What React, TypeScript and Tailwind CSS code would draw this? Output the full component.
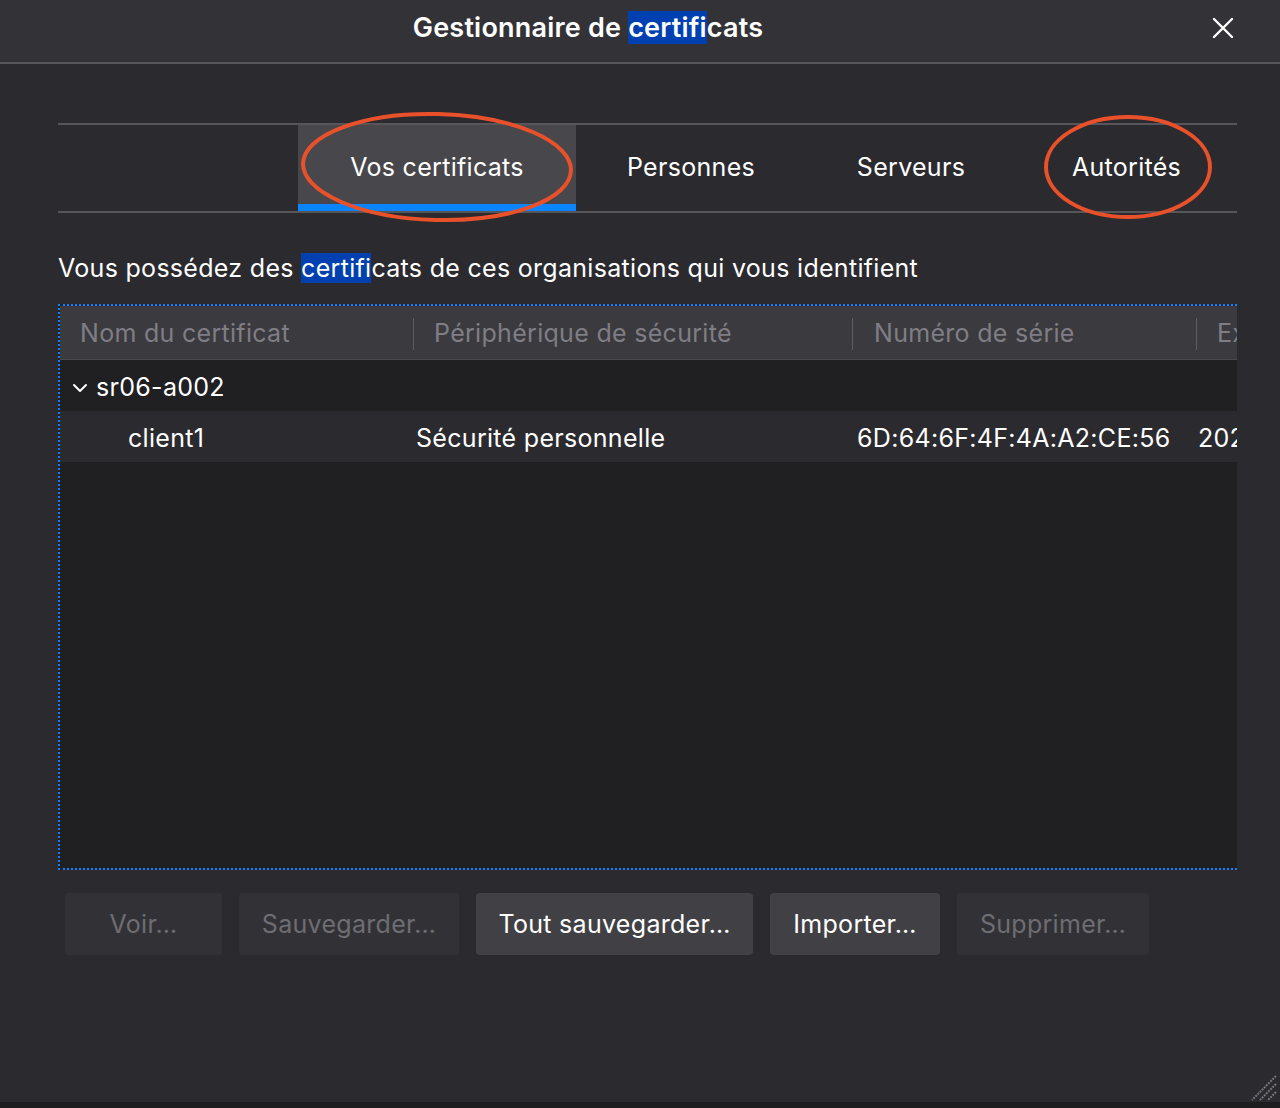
import React from "react";

const font = { fontFamily: "Inter, 'Noto Sans', sans-serif" };

const tabs = [
  { label: "Vos certificats", w: "w-[278px]", active: true },
  { label: "Personnes", w: "w-[230px]", active: false },
  { label: "Serveurs", w: "w-[210px]", active: false },
  { label: "Autorités", w: "w-[221px]", active: false },
];

const buttons = [
  { label: "Voir…", w: "w-[157px]", enabled: false },
  { label: "Sauvegarder…", w: "w-[220px]", enabled: false },
  { label: "Tout sauvegarder…", w: "w-[277px]", enabled: true },
  { label: "Importer…", w: "w-[170px]", enabled: true },
  { label: "Supprimer…", w: "w-[192px]", enabled: false },
];

function Highlight({ children }: { children: React.ReactNode }) {
  return <span className="bg-[#0040b0]">{children}</span>;
}

export default function App() {
  return (
    <div
      className="relative flex h-[1108px] w-[1280px] flex-col overflow-hidden bg-[#2b2a2f] text-[25px] tracking-[0.3px] text-white"
      style={font}
    >
      {/* Title bar */}
      <div className="relative flex h-[64px] shrink-0 items-center justify-center border-b-2 border-[#57565b] bg-[#333237] pr-[104px]">
        <h1 className="-mt-[6px] text-[27px] font-semibold tracking-[0.2px]">
          Gestionnaire de <Highlight>certifi</Highlight>cats
        </h1>
        <svg
          className="absolute left-[1212px] top-[17px]"
          width="22"
          height="22"
          viewBox="0 0 22 22"
          fill="none"
          stroke="white"
          strokeWidth="2.4"
          strokeLinecap="round"
        >
          <path d="M2 2 L20 20 M20 2 L2 20" />
        </svg>
      </div>

      {/* Body */}
      <div className="flex flex-1 flex-col pl-[58px] pr-[43px] pt-[59px]">
        {/* Tabs */}
        <div className="flex h-[90px] justify-end border-y-2 border-[#56555a]">
          {tabs.map((t) => (
            <div
              key={t.label}
              className={`${t.w} relative flex items-center justify-center ${
                t.active ? "bg-[#48474c]" : ""
              }`}
            >
              <span className="-mt-[1px]">{t.label}</span>
              {t.active && (
                <div className="absolute bottom-0 left-0 right-0 h-[7px] bg-[#0a84ff]" />
              )}
            </div>
          ))}
        </div>

        <p className="mt-[40px] leading-[30px]">
          Vous possédez des <Highlight>certifi</Highlight>cats de ces organisations qui vous identifient
        </p>

        {/* Tree table */}
        <div className="mt-[21px] h-[566px] overflow-hidden border-y-2 border-l-2 border-dotted border-[#0a84ff] bg-[#202023]">
          <div className="w-[1400px]">
            <div className="flex h-[54px] items-center border-b border-[#4a494e] bg-[#3b3a3f] pt-[2px] text-[#7f7e84]">
              <div className="w-[353px] pl-[20px]">Nom du certificat</div>
              <div className="h-[32px] w-px bg-[#5e5d62]" />
              <div className="w-[438px] pl-[20px]">Périphérique de sécurité</div>
              <div className="h-[32px] w-px bg-[#5e5d62]" />
              <div className="w-[343px] pl-[21px]">Numéro de série</div>
              <div className="h-[32px] w-px bg-[#5e5d62]" />
              <div className="pl-[20px]">Expire le</div>
            </div>
            <div className="flex h-[51px] items-center pt-[5px]">
              <svg
                className="ml-[12px] mr-[8px]"
                width="16"
                height="10"
                viewBox="0 0 16 10"
                fill="none"
                stroke="white"
                strokeWidth="2"
                strokeLinecap="round"
                strokeLinejoin="round"
              >
                <path d="M2 2 L8 8 L14 2" />
              </svg>
              <span>sr06-a002</span>
            </div>
            <div className="flex h-[51px] items-center bg-[#2b2b2f] pt-[5px]">
              <div className="w-[356px] pl-[68px]">client1</div>
              <div className="w-[439px]">Sécurité personnelle</div>
              <div className="w-[343px] pl-[2px]">6D:64:6F:4F:4A:A2:CE:56</div>
              <div>2024-03-14</div>
            </div>
          </div>
        </div>

        {/* Buttons */}
        <div className="mt-[23px] flex gap-[17px] pl-[7px]">
          {buttons.map((b) => (
            <button
              key={b.label}
              className={`${b.w} flex h-[62px] items-center justify-center rounded-[4px] pt-[1px] ${
                b.enabled ? "bg-[#414145] text-white" : "bg-[#323236] text-[#6e6d72]"
              }`}
            >
              {b.label}
            </button>
          ))}
        </div>
      </div>

      <div className="h-[6px] shrink-0 bg-[#1d1d20]" />

      {/* Resize grip */}
      <svg
        className="absolute left-[1248px] top-[1072px]"
        width="30"
        height="30"
        viewBox="0 0 30 30"
        stroke="#77767b"
        strokeWidth="2"
        strokeDasharray="2 1"
      >
        <path d="M28 4 L4 28 M28 12 L12 28 M28 20 L20 28" />
      </svg>

      {/* Annotation ellipses */}
      <svg
        className="pointer-events-none absolute left-0 top-0"
        width="1280"
        height="1108"
        fill="none"
        stroke="#e9512b"
        strokeWidth="4"
      >
        <ellipse cx="437" cy="167" rx="134" ry="53" transform="rotate(1.5 437 167)" />
        <ellipse cx="1128" cy="167" rx="82" ry="50" />
      </svg>
    </div>
  );
}
